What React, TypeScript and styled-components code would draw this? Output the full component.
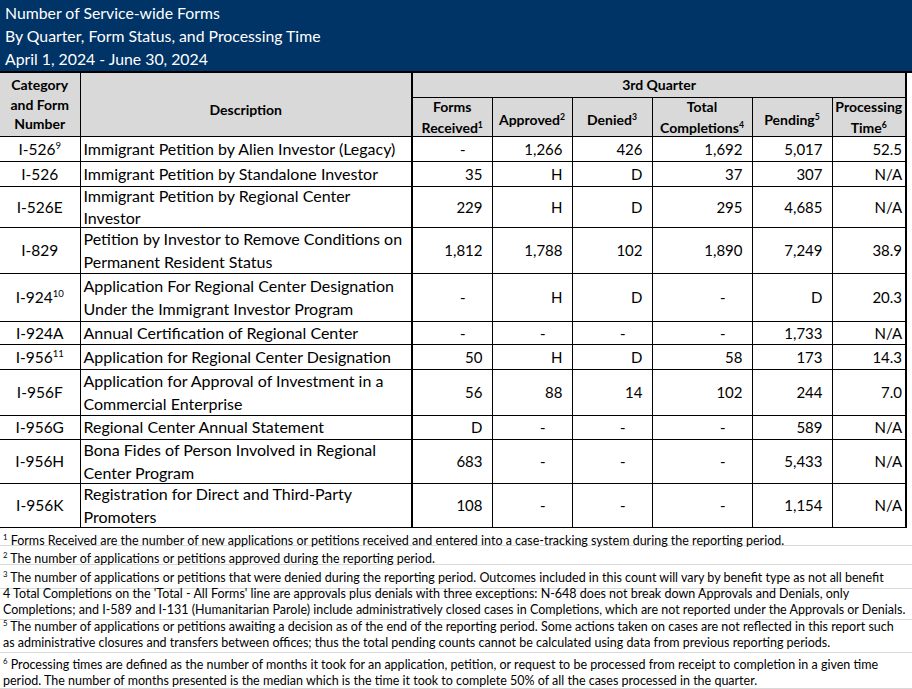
import * as React from 'react'
import styled, { createGlobalStyle } from 'styled-components'

interface FormRow {
  form: string
  sup?: string
  desc: string[]
  vals: string[]
  time: string
  h: number
}

const rows: FormRow[] = [
  { form: 'I-526', sup: '9', desc: ['Immigrant Petition by Alien Investor (Legacy)'], vals: ['-', '1,266', '426', '1,692', '5,017'], time: '52.5', h: 25 },
  { form: 'I-526', desc: ['Immigrant Petition by Standalone Investor'], vals: ['35', 'H', 'D', '37', '307'], time: 'N/A', h: 25 },
  { form: 'I-526E', desc: ['Immigrant Petition by Regional Center', 'Investor'], vals: ['229', 'H', 'D', '295', '4,685'], time: 'N/A', h: 41 },
  { form: 'I-829', desc: ['Petition by Investor to Remove Conditions on', 'Permanent Resident Status'], vals: ['1,812', '1,788', '102', '1,890', '7,249'], time: '38.9', h: 46 },
  { form: 'I-924', sup: '10', desc: ['Application For Regional Center Designation', 'Under the Immigrant Investor Program'], vals: ['-', 'H', 'D', '-', 'D'], time: '20.3', h: 48 },
  { form: 'I-924A', desc: ['Annual Certification of Regional Center'], vals: ['-', '-', '-', '-', '1,733'], time: 'N/A', h: 23 },
  { form: 'I-956', sup: '11', desc: ['Application for Regional Center Designation'], vals: ['50', 'H', 'D', '58', '173'], time: '14.3', h: 25 },
  { form: 'I-956F', desc: ['Application for Approval of Investment in a', 'Commercial Enterprise'], vals: ['56', '88', '14', '102', '244'], time: '7.0', h: 46 },
  { form: 'I-956G', desc: ['Regional Center Annual Statement'], vals: ['D', '-', '-', '-', '589'], time: 'N/A', h: 24 },
  { form: 'I-956H', desc: ['Bona Fides of Person Involved in Regional', 'Center Program'], vals: ['683', '-', '-', '-', '5,433'], time: 'N/A', h: 44 },
  { form: 'I-956K', desc: ['Registration for Direct and Third-Party', 'Promoters'], vals: ['108', '-', '-', '-', '1,154'], time: 'N/A', h: 44 }
]

const GlobalStyle = createGlobalStyle`
  body {
    margin: 0;
    background: #fff;
  }
`

const Sheet = styled.div`
  width: 912px;
  font-family: Lato, 'Open Sans', sans-serif;
  color: #000;
`

const TitleBand = styled.div`
  background: #003366;
  color: #fff;
  padding: 1px 5px 1px;
  border-bottom: 2px solid #000;
  font-size: 15.8px;
`

const TitleLine = styled.div`
  height: 23px;
  line-height: 23px;
`

const Grid = styled.table`
  width: 906px;
  border-collapse: collapse;
  table-layout: fixed;
  border-right: 2px solid #000;
`

const HeadCell = styled.th<{ $thick?: boolean }>`
  background: #d9d9d9;
  border: 1px solid #000;
  border-top: none;
  border-left: none;
  border-right: ${p => (p.$thick ? 2 : 1)}px solid #000;
  padding: 0;
  font-weight: 700;
  font-size: 14px;
  text-align: center;
  vertical-align: middle;
`

const HeadBody = styled.div<{ $h: number; $lh: number; $drop?: number }>`
  height: ${p => p.$h - (p.$drop ?? 0)}px;
  padding-top: ${p => p.$drop ?? 0}px;
  line-height: ${p => p.$lh}px;
  display: flex;
  flex-direction: column;
  justify-content: center;
`

const DataCell = styled.td<{ $thick?: boolean; $size: number }>`
  border-bottom: 1px solid #000;
  border-right: ${p => (p.$thick ? 2 : 1)}px solid #000;
  padding: 0;
  font-size: ${p => p.$size}px;
  vertical-align: middle;
`

const CellBody = styled.div<{ $h: number; $align: 'left' | 'center' | 'right'; $pad: number }>`
  height: ${p => p.$h}px;
  display: flex;
  flex-direction: column;
  justify-content: center;
  text-align: ${p => p.$align};
  padding: ${p => (p.$align === 'left' ? `0 0 0 ${p.$pad}px` : `0 ${p.$pad}px 0 0`)};
  line-height: 22.5px;
  white-space: nowrap;
  overflow: visible;
`

const Sup = styled.sup`
  font-size: 0.62em;
  line-height: 0;
  vertical-align: 0.6em;
`

const Notes = styled.div`
  font-size: 12.5px;
`

const Note = styled.div<{ $h: number; $lift: number }>`
  height: ${p => p.$h - 1}px;
  border-bottom: 1px solid #d9d9d9;
  padding-left: 3px;
  display: flex;
  flex-direction: column;
  justify-content: flex-end;
  line-height: 16px;
  white-space: nowrap;
  overflow: visible;

  & > div:last-child {
    margin-bottom: ${p => p.$lift}px;
  }
`

const NoteLine = styled.div``

const subHeads: { top?: string; bottom: string; sup: string }[] = [
  { top: 'Forms', bottom: 'Received', sup: '1' },
  { bottom: 'Approved', sup: '2' },
  { bottom: 'Denied', sup: '3' },
  { top: 'Total', bottom: 'Completions', sup: '4' },
  { bottom: 'Pending', sup: '5' },
  { top: 'Processing', bottom: 'Time', sup: '6' }
]

const notes: { h: number; lift: number; lines: React.ReactNode[] }[] = [
  { h: 18, lift: -4, lines: [<><Sup>1</Sup> Forms Received are the number of new applications or petitions received and entered into a case-tracking system during the reporting period.</>] },
  { h: 19, lift: -3, lines: [<><Sup>2</Sup> The number of applications or petitions approved during the reporting period.</>] },
  { h: 24, lift: 2, lines: [<><Sup>3</Sup> The number of applications or petitions that were denied during the reporting period. Outcomes included in this count will vary by benefit type as not all benefit</>] },
  {
    h: 31,
    lift: 1,
    lines: [
      "4 Total Completions on the 'Total - All Forms' line are approvals plus denials with three exceptions: N-648 does not break down Approvals and Denials, only",
      'Completions; and I-589 and I-131 (Humanitarian Parole) include administratively closed cases in Completions, which are not reported under the Approvals or Denials.'
    ]
  },
  {
    h: 33,
    lift: 1,
    lines: [
      <><Sup>5</Sup> The number of applications or petitions awaiting a decision as of the end of the reporting period. Some actions taken on cases are not reflected in this report such</>,
      'as administrative closures and transfers between offices; thus the total pending counts cannot be calculated using data from previous reporting periods.'
    ]
  },
  {
    h: 36,
    lift: -1,
    lines: [
      <><Sup>6</Sup> Processing times are defined as the number of months it took for an application, petition, or request to be processed from receipt to completion in a given time</>,
      'period. The number of months presented is the median which is the time it took to complete 50% of all the cases processed in the quarter.'
    ]
  }
]

const widths = [80, 332, 80, 80, 80, 100, 80, 74]

const App = () => {
  return (
    <Sheet>
      <GlobalStyle />
      <TitleBand>
        <TitleLine>Number of Service-wide Forms</TitleLine>
        <TitleLine>By Quarter, Form Status, and Processing Time</TitleLine>
        <TitleLine>April 1, 2024 - June 30, 2024</TitleLine>
      </TitleBand>
      <Grid>
        <colgroup>
          {widths.map((w, i) => (
            <col key={i} style={{ width: w }} />
          ))}
        </colgroup>
        <thead>
          <tr>
            <HeadCell rowSpan={2}>
              <HeadBody $h={63} $lh={19.7}>
                <div>Category</div>
                <div>and Form</div>
                <div>Number</div>
              </HeadBody>
            </HeadCell>
            <HeadCell rowSpan={2} $thick>
              <HeadBody $h={63} $lh={20} $drop={10}>
                Description
              </HeadBody>
            </HeadCell>
            <HeadCell colSpan={6}>
              <HeadBody $h={24} $lh={20}>
                3rd Quarter
              </HeadBody>
            </HeadCell>
          </tr>
          <tr>
            {subHeads.map(s => (
              <HeadCell key={s.bottom}>
                <HeadBody $h={38} $lh={21.3} $drop={s.top ? 0 : 5}>
                  {s.top ? <div>{s.top}</div> : null}
                  <div>
                    {s.bottom}
                    <Sup>{s.sup}</Sup>
                  </div>
                </HeadBody>
              </HeadCell>
            ))}
          </tr>
        </thead>
        <tbody>
          {rows.map((r, i) => (
            <tr key={i}>
              <DataCell $size={15.5}>
                <CellBody $h={r.h - 1} $align='center' $pad={0}>
                  <div>
                    {r.form}
                    {r.sup ? <Sup>{r.sup}</Sup> : null}
                  </div>
                </CellBody>
              </DataCell>
              <DataCell $thick $size={16}>
                <CellBody $h={r.h - 1} $align='left' $pad={3}>
                  {r.desc.map(line => (
                    <div key={line}>{line}</div>
                  ))}
                </CellBody>
              </DataCell>
              {r.vals.map((v, j) => (
                <DataCell key={j} $size={15}>
                  <CellBody $h={r.h - 1} $align='right' $pad={v === '-' ? 26 : 9}>
                    {v}
                  </CellBody>
                </DataCell>
              ))}
              <DataCell $size={15}>
                <CellBody $h={r.h - 1} $align='right' $pad={3}>
                  {r.time}
                </CellBody>
              </DataCell>
            </tr>
          ))}
        </tbody>
      </Grid>
      <Notes>
        {notes.map((n, i) => (
          <Note key={i} $h={n.h} $lift={n.lift}>
            {n.lines.map((l, k) => (
              <NoteLine key={k}>{l}</NoteLine>
            ))}
          </Note>
        ))}
      </Notes>
    </Sheet>
  )
}

export default App
